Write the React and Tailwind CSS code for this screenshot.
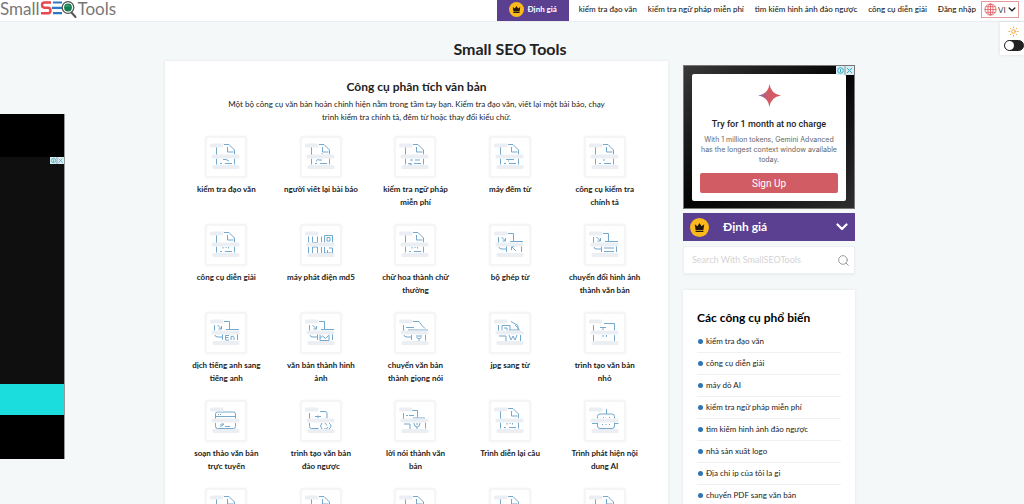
import React from "react";
import { Search, Sun } from "lucide-react";

const navLinks = [
  "kiểm tra đạo văn",
  "kiểm tra ngữ pháp miễn phí",
  "tìm kiếm hình ảnh đảo ngược",
  "công cụ diễn giải",
  "Đăng nhập",
];

const tools = [
  ["kiểm tra đạo văn", "doc", "scan"],
  ["người viết lại bài báo", "doc", "pen"],
  ["kiểm tra ngữ pháp\nmiễn phí", "doc", "wave"],
  ["máy đếm từ", "doc", "line"],
  ["công cụ kiểm tra\nchính tả", "doc", "dot"],
  ["công cụ diễn giải", "doc", "quote"],
  ["máy phát điện md5", "code"],
  ["chữ hoa thành chữ\nthường", "doc", "quote"],
  ["bộ ghép từ", "convert", "arrow"],
  ["chuyển đổi hình ảnh\nthành văn bản", "convert", "lines"],
  ["dịch tiếng anh sang\ntiếng anh", "convert", "en"],
  ["văn bản thành hình\nảnh", "convert", "image"],
  ["chuyển văn bản\nthành giọng nói", "speech"],
  ["jpg sang từ", "word"],
  ["trình tạo văn bản\nnhỏ", "small"],
  ["soạn thảo văn bản\ntrực tuyến", "editor"],
  ["trình tạo văn bản\nđảo ngược", "reverse"],
  ["lời nói thành văn\nbản", "voice"],
  ["Trình diễn lại câu", "doc", "quote"],
  ["Trình phát hiện nội\ndung AI", "robot"],
  ["", "doc", "line"],
  ["", "doc", "line"],
  ["", "doc", "line"],
  ["", "doc", "line"],
  ["", "doc", "line"],
];

const popular = [
  "kiểm tra đạo văn",
  "công cụ diễn giải",
  "máy dò AI",
  "kiểm tra ngữ pháp miễn phí",
  "tìm kiếm hình ảnh đảo ngược",
  "nhà sản xuất logo",
  "Địa chỉ ip của tôi la gi",
  "chuyển PDF sang văn bản",
];

const shapes = {
  doc: "M11.5 11v8M11.5 22.500v6M19 8.500h5l5.500 5.500v4.500M22.500 11v5h6M29.500 22.500v6M15 27.500h2M20 27.500h7",
  convert:
    "M9.500 13v6M19 9.500h5.500v8M21 17.500h13M10 23q0 2 3 2h4M17.500 22v6M32.500 22v6",
  code: "M8.500 12.500v6M12.500 12.500v6h5v-6M21.500 12.500v6M24.500 18.500v-7h8v7M27 13.500h3v3.500h-3zM8.500 23v6M12.500 29v-6h5v6M21.500 23v6M24.500 23v6h3v-3M29 24h3.500v5h-5",
  speech:
    "M9.500 13v6M12 15.500h8M19 9.500h6l3 4 3 3M14 18h20M10 23q0 2 3 2h4M17.500 23v5M22 24h6M22.500 25.500q2.500 3 5 0M25 27.500v2M31.500 22.500v6",
  word: "M9.500 13v6M13 18.500v-5h8v5M15 16h3v2.500M22 9.500l7 4v5M26 13l4 4M20 18h11M10 24h7v5M20 23l2 5 2-4 2 4 2-5M31.500 23v6",
  small:
    "M9.500 13v6M20 11.500h10.500v7M16 15.500h6M18 17h2M9.500 23v7M19 23v2M22.500 23v2M30.500 23v7",
  editor:
    "M10.500 19v-5q0-2 2-2h16q2 0 2 2v5M11 16.500h19M13 14.500h1M15 14.500h1M10.500 23v3.500q0 2 2 2h16q2 0 2-2V23M16 27v-3h3l-2 2M20 26.500h5",
  reverse:
    "M9.500 13v6M20 11.500h5q2 0 2 2v5M15 16.500h6M18 15.500v2.500M9.500 23v3.500q0 2 2 2h7M22 23q-3 3 0 6M29 23q4 3 0 6M24 29q3 1 4-2M25 23l2 2.500",
  voice:
    "M9.500 13v6M12 15.500h2M15 15.500h5M18 10.500h5.500v7M19 18h12M10 24h6v5M20 23q0 4 3 4t3-4M22 24h2M23 27v2M31.500 22.500v6",
  robot:
    "M22.500 9v5M13.500 18.500v-2q0-2.500 2.500-2.500h12q2.500 0 2.500 2.500v2M19 17.500h1M25 17.500h1M8 23.500h5.500M30.500 23.500h4M13.500 22.500v3.500q0 2.500 2.500 2.500h12q2.500 0 2.500-2.500v-3.500M18 24.500h1M21.500 24.500h1M25 24.500h1",
};

const marks = {
  scan: "M18 23.500h3l3 1.500",
  pen: "M16 25.500l1.500-2 1.500.500M19 24h3M22 18v-1",
  wave: "M16 24h3M21 24h5M14 28q1-1 2 0t2 0",
  line: "M17 23.500h8M19 25h1",
  dot: "M20 23v2",
  quote: "M18 23v1.500M20.500 23.500h1M23.500 23v1.500",
  arrow: "M12.500 13l4 4M16.500 14v3h-3M27 27l-4-4M22.500 26v-3.500h3",
  lines: "M12.500 13l4 4M16.500 14v3h-3M20 24h10M20 27.500h10",
  en: "M12.500 13l4 4M16.500 14v3h-3M24 23.500h-3.500v4.500h3.500M20.500 25.500h3M26 28v-3.500q3-1 3 1v2.500",
  image: "M12.500 13l4 4M16.500 14v3h-3M20 22.500v6h9v-6M20 26l2.500-2 3 2.500 3-3",
};

function ToolIcon({ shape, mark }) {
  return (
    <svg viewBox="0 0 42 42" className="size-[42px]" aria-hidden="true">
      <path
        d={shapes[shape] + (mark ? marks[mark] : "")}
        fill="none"
        stroke="#73a8cf"
        strokeWidth="1"
        strokeLinejoin="round"
      />
      <g fill="#ebeff3">
        <rect x="5" y="7.5" width="13.500" height="4" rx="1.500" />
        <rect x="6.500" y="18.500" width="28" height="4" rx="1.500" />
        <rect x="7.500" y="29" width="27" height="4" rx="1.500" />
      </g>
    </svg>
  );
}

function Crown({ className }) {
  return (
    <svg viewBox="0 0 20 20" className={className} aria-hidden="true">
      <circle cx="10" cy="10" r="10" fill="#fbb91c" />
      <path
        d="M5 6.500l2.800 2.300L10 5.300l2.200 3.500L15 6.500l-.9 6H5.900zM5.900 13.300h8.200v1.400H5.900z"
        fill="#20160a"
      />
    </svg>
  );
}

function Chevron({ className }) {
  return (
    <svg viewBox="0 0 12 8" className={className} aria-hidden="true">
      <path
        d="M1.500 1.500L6 6l4.500-4.500"
        fill="none"
        stroke="currentColor"
        strokeWidth="2.200"
        strokeLinecap="round"
        strokeLinejoin="round"
      />
    </svg>
  );
}

function AdBadges({ className }) {
  return (
    <svg viewBox="0 0 18 9" className={className} aria-hidden="true">
      <path d="M0 0h18v9H0z" fill="#d9eef2" />
      <g fill="none" stroke="#35a9c4" strokeWidth="1">
        <circle cx="4.500" cy="4.500" r="2.800" />
        <path d="M4.500 3v3.200M11 2l5 5M16 2l-5 5" />
      </g>
      <path d="M9 0v9" stroke="#555" strokeWidth=".6" />
    </svg>
  );
}

function Logo() {
  return (
    <a
      href="#"
      aria-label="SmallSEOTools"
      className="flex h-[21px] items-start text-[17px] leading-[18px] text-[#777]"
    >
      <span>Small</span>
      <svg viewBox="0 0 38 20" className="h-5 w-[38px] shrink-0" aria-hidden="true">
        <path
          d="M11 2.500H4.500Q2 2.500 2 5t2.500 2.800H8q2.500 0 2.500 2.700T8 13.200H1"
          fill="none"
          stroke="#e8484d"
          strokeWidth="2.400"
        />
        <path
          d="M13 2.500h9M12 7.800h10M13 13.200h9"
          fill="none"
          stroke="#2f78bd"
          strokeWidth="2.200"
        />
        <circle cx="28" cy="7.500" r="5.800" fill="#fff" stroke="#555" strokeWidth="1.300" />
        <circle cx="28" cy="7.500" r="3.900" fill="#12804f" />
        <path d="M25.500 6.500q2-2.500 4 0" fill="none" stroke="#7cc39c" strokeWidth=".8" />
        <path d="M31.500 12.500l4 4.500" stroke="#555" strokeWidth="2" strokeLinecap="round" />
      </svg>
      <span>Tools</span>
    </a>
  );
}

function Header() {
  return (
    <header className="flex h-[22px] items-start justify-between border-b border-[#e9edef] bg-white pr-[5px]">
      <Logo />
      <nav className="flex items-start text-[8px] font-medium text-[#222]">
        <a
          href="#"
          className="mr-2.5 flex h-[21px] w-18 items-center justify-center gap-1 bg-[#5b3f91] pb-[3px] font-bold text-white"
        >
          <Crown className="size-[15px]" />
          <span>Định giá</span>
        </a>
        <div className="flex h-[18px] items-center gap-[11px]">
          {navLinks.map((link) => (
            <a key={link} href="#" className="whitespace-nowrap">
              {link}
            </a>
          ))}
        </div>
        <label className="mt-px ml-[5px] flex h-[17px] w-[38px] items-center justify-between border border-[#e79a9d] px-0.5">
          <svg viewBox="0 0 14 14" className="size-[13px]" aria-hidden="true">
            <g fill="none" stroke="#dd5a60" strokeWidth=".9">
              <circle cx="7" cy="7" r="6" />
              <ellipse cx="7" cy="7" rx="2.800" ry="6" />
              <path d="M7 1v12M1 7h12M2 4h10M2 10h10" />
            </g>
          </svg>
          <select
            aria-label="Ngôn ngữ"
            className="w-[9px] appearance-none text-[8px] font-normal text-[#444] outline-none"
          >
            <option>VI</option>
          </select>
          <Chevron className="h-[5px] w-2" />
        </label>
      </nav>
    </header>
  );
}

function LeftAd() {
  return (
    <aside className="mt-[92px] w-[65px] border-r border-[#999] bg-black">
      <div className="h-[43px]" />
      <div className="flex h-[227px] items-start justify-end bg-[#0f0f0f]">
        <AdBadges className="h-[7px] w-3.5" />
      </div>
      <div className="h-[31px] bg-[#1cdddd]" />
      <div className="h-11" />
    </aside>
  );
}

function ToolsCard() {
  return (
    <section className="bg-white pt-[18px] pb-6 shadow-[0_0_3px_rgba(0,0,0,0.08)]">
      <h2 className="text-center text-[12px] leading-4 font-bold text-[#222]">
        Công cụ phân tích văn bản
      </h2>
      <p className="mx-auto mt-[3px] max-w-96 text-center text-[8px] leading-[13px] text-[#222]">
        Một bộ công cụ văn bản hoàn chỉnh hiện nằm trong tầm tay bạn. Kiểm tra
        đạo văn, viết lại một bài báo, chạy trình kiểm tra chính tả, đếm từ hoặc
        thay đổi kiểu chữ.
      </p>
      <div className="mt-3 grid grid-cols-5 gap-y-[15px] pr-4 pl-3.5">
        {tools.map(([label, shape, mark], i) => (
          <a key={i} href="#" className="flex flex-col items-center gap-[5px]">
            <span className="rounded-[3px] border-2 border-[#f3f5f6] bg-white shadow-[0_0_3px_rgba(0,0,0,0.05)]">
              <span className="-m-0.5 block">
                <ToolIcon shape={shape} mark={mark} />
              </span>
            </span>
            <span className="min-h-[26px] text-center text-[8px] leading-[13px] font-bold whitespace-pre-line text-[#222]">
              {label}
            </span>
          </a>
        ))}
      </div>
    </section>
  );
}

function GeminiAd() {
  return (
    <aside className="relative h-36 border border-[#777] bg-linear-to-br from-[#3a3a3a] via-[#050505] to-[#2e2e2e] px-2 pt-2">
      <AdBadges className="absolute top-0 right-0 h-[9px] w-[18px]" />
      <div className="flex h-[127px] flex-col items-center rounded-[2px] bg-white px-2 pt-2.5">
        <svg viewBox="0 0 24 24" className="size-[23px]" aria-hidden="true">
          <defs>
            <linearGradient id="spark">
              <stop offset="0" stopColor="#6f6fc4" />
              <stop offset=".4" stopColor="#d25a66" />
              <stop offset="1" stopColor="#d65a60" />
            </linearGradient>
          </defs>
          <path
            d="M12 0q1.500 10.500 12 12-10.500 1.500-12 12Q10.500 13.500 0 12 10.500 10.500 12 0z"
            fill="url(#spark)"
          />
        </svg>
        <h3 className="mt-[11px] font-[Roboto,sans-serif] text-[9px] leading-3 font-medium text-[#222]">
          Try for 1 month at no charge
        </h3>
        <p className="mt-[5px] text-center font-[Inter,sans-serif] text-[7px] leading-[10px] text-[#666]">
          With 1 million tokens, Gemini Advanced has the longest context window
          available today.
        </p>
        <button
          type="button"
          className="mt-2 h-5 w-full rounded-[2px] bg-[#d25c64] font-[Roboto,sans-serif] text-[10px] text-white"
        >
          Sign Up
        </button>
      </div>
    </aside>
  );
}

function Sidebar() {
  return (
    <div className="flex flex-col pt-1">
      <GeminiAd />
      <button
        type="button"
        className="mt-1 flex h-7 items-center bg-[#5b3f91] px-[7px] text-[12px] font-bold text-white"
      >
        <Crown className="size-[19px]" />
        <span className="ml-3.5">Định giá</span>
        <Chevron className="ml-auto h-2 w-3" />
      </button>
      <form className="mt-[5px] flex h-7 items-center border border-[#edf0f2] bg-white px-1 shadow-xs">
        <input
          type="text"
          aria-label="Search With SmallSEOTools"
          placeholder="Search With SmallSEOTools"
          className="w-full min-w-0 flex-1 pl-1 text-[9px] outline-none placeholder:text-[#d4d4d4]"
        />
        <button type="button" aria-label="Search">
          <Search className="size-[13px] text-[#999]" strokeWidth={1.8} />
        </button>
      </form>
      <section className="mt-4 bg-white px-3.5 pt-5 pb-6 shadow-[0_0_3px_rgba(0,0,0,0.08)]">
        <h2 className="text-[12px] leading-4 font-bold text-black">
          Các công cụ phổ biến
        </h2>
        <ul className="mt-[5px] text-[8px] leading-[13px] text-[#222]">
          {popular.map((item) => (
            <li key={item} className="border-b border-[#eff2f3] py-1">
              <a href="#" className="flex items-center gap-[3px] pl-px">
                <span className="size-[5px] rounded-full bg-[#2f74b5]" />
                {item}
              </a>
            </li>
          ))}
        </ul>
      </section>
    </div>
  );
}

function ThemeSwitch() {
  return (
    <label className="flex h-[33px] w-6 flex-col items-end gap-[3px] justify-self-end bg-white pt-1 shadow-[0_0_3px_rgba(0,0,0,0.12)]">
      <Sun className="mr-[5px] size-[11px] text-[#f0a030]" />
      <input type="checkbox" aria-label="Chế độ tối" className="peer sr-only" />
      <span className="h-[11px] w-5 rounded-full border border-[#222] bg-[#222]">
        <span className="block size-[9px] rounded-full bg-white" />
      </span>
    </label>
  );
}

export default function App() {
  return (
    <div className="min-h-screen bg-[#f4f8f9] font-[Lato,'Open_Sans',sans-serif]">
      <Header />
      <div className="grid grid-cols-[1fr_minmax(0,690px)_1fr] items-start">
        <LeftAd />
        <main className="mr-0.5 -ml-0.5 pt-[17px]">
          <h1 className="mb-0.5 text-center text-[16px] leading-5 font-bold text-[#222]">
            Small SEO Tools
          </h1>
          <div className="grid grid-cols-[minmax(0,503fr)_minmax(0,172fr)] items-start gap-[15px]">
            <ToolsCard />
            <Sidebar />
          </div>
        </main>
        <ThemeSwitch />
      </div>
    </div>
  );
}
